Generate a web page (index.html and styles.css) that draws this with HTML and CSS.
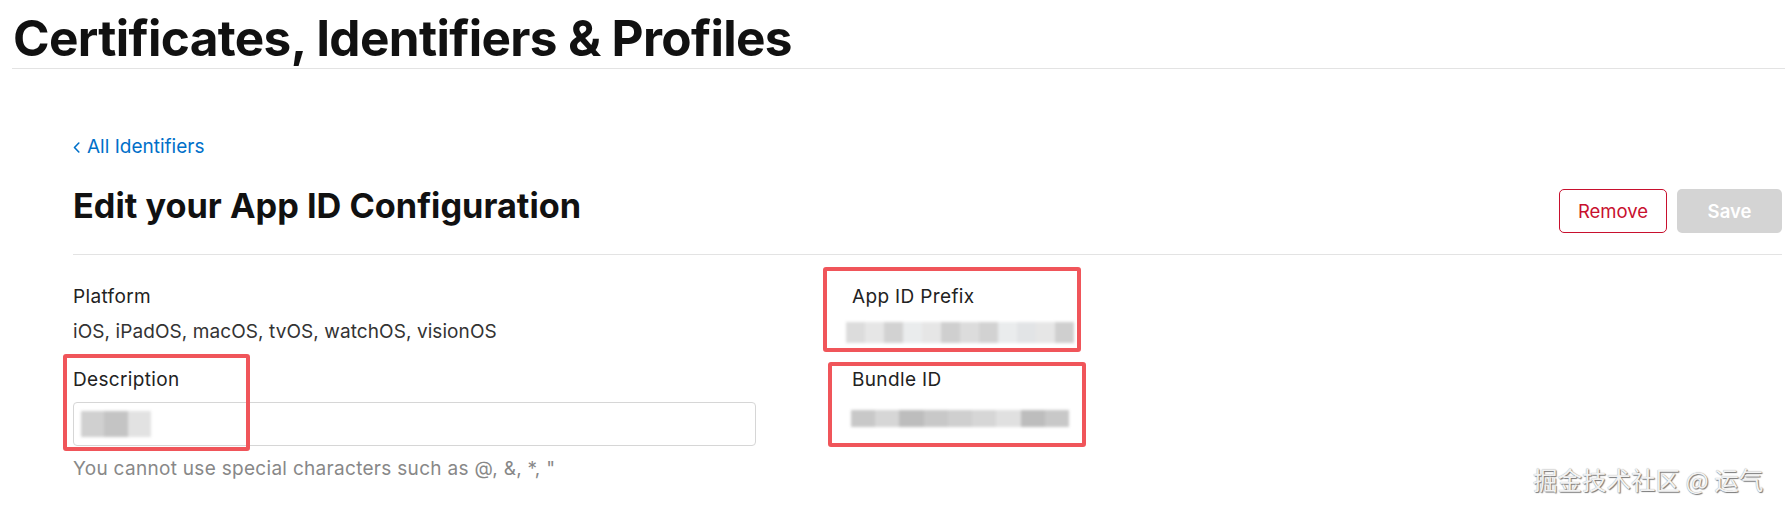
FILE: index.html
```html
<!DOCTYPE html>
<html lang="en">
<head>
<meta charset="utf-8">
<title>Edit your App ID Configuration</title>
<link rel="stylesheet" href="styles.css">
</head>
<body>
<header class="page-header">
  <h1 class="page-title">Certificates, Identifiers &amp; Profiles</h1>
</header>
<main class="content">
  <a class="back-link" href="#"><svg class="chev" width="7" height="11" viewBox="0 0 7 11"><path d="M5.8 1 L1.5 5.5 L5.8 10" fill="none" stroke="currentColor" stroke-width="1.6" stroke-linecap="round" stroke-linejoin="round"/></svg><span>All Identifiers</span></a>
  <div class="title-row">
    <h2 class="section-title">Edit your App ID Configuration</h2>
    <div class="actions">
      <button class="btn btn-remove" type="button">Remove</button>
      <button class="btn btn-save" type="button" disabled>Save</button>
    </div>
  </div>
  <div class="form-grid">
    <div class="field">
      <div class="label">Platform</div>
      <div class="value">iOS, iPadOS, macOS, tvOS, watchOS, visionOS</div>
    </div>
    <div class="field">
      <div class="label">App ID Prefix</div>
      <div class="mosaic mosaic-prefix">
        <i class="c1"></i><i class="c2"></i><i class="c3"></i><i class="c4"></i><i class="c2"></i><i class="c5"></i><i class="c1"></i><i class="c3"></i><i class="c4"></i><i class="c6"></i><i class="c2"></i><i class="c5"></i>
      </div>
      <div class="annot annot-prefix"></div>
    </div>
    <div class="field">
      <div class="label">Description</div>
      <div class="input-box">
        <div class="mosaic mosaic-desc"><i class="d1"></i><i class="d2"></i><i class="d3"></i></div>
      </div>
      <div class="help">You cannot use special characters such as @, &amp;, *, "</div>
      <div class="annot annot-desc"></div>
    </div>
    <div class="field">
      <div class="label">Bundle ID</div>
      <div class="mosaic mosaic-bundle">
        <i class="b1"></i><i class="b2"></i><i class="b3"></i><i class="b1"></i><i class="b4"></i><i class="b2"></i><i class="b5"></i><i class="b3"></i><i class="b1"></i>
      </div>
      <div class="annot annot-bundle"></div>
    </div>
  </div>
</main>
<div class="watermark">掘金技术社区 @ 运气</div>
</body>
</html>
```

FILE: styles.css
```css
html, body {
  margin: 0;
  padding: 0;
  background: #ffffff;
}

body {
  font-family: Inter, "Noto Sans", "Liberation Sans", sans-serif;
  color: #333333;
  position: relative;
  min-height: 510px;
}

.page-header {
  margin-left: 12px;
  padding: 10px 0 2px 1px;
  border-bottom: 1px solid #e3e3e3;
}

.page-title {
  margin: 0;
  font-size: 49.5px;
  line-height: 56px;
  font-weight: 700;
  letter-spacing: -0.65px;
  color: #111111;
}

.content {
  padding: 66px 3px 0 73px;
}

.back-link {
  display: inline-flex;
  align-items: center;
  gap: 7px;
  font-size: 19px;
  line-height: 24px;
  color: #0070c9;
  text-decoration: none;
}

.chev {
  display: block;
  margin-top: 1px;
}

.title-row {
  display: flex;
  justify-content: space-between;
  align-items: flex-start;
  margin-top: 27px;
  padding-bottom: 21px;
  border-bottom: 1px solid #e3e3e3;
}

.section-title {
  margin: 0;
  font-size: 34.3px;
  line-height: 40px;
  font-weight: 700;
  letter-spacing: 0;
  color: #111111;
}

.actions {
  display: flex;
  gap: 10px;
  margin-top: 3px;
}

.btn {
  height: 44px;
  border-radius: 5px;
  font-family: Inter, "Noto Sans", sans-serif;
  font-size: 18.5px;
  padding: 0;
}

.btn-remove {
  width: 108px;
  border: 1px solid #c8102e;
  background: #ffffff;
  color: #c8102e;
  font-weight: 400;
}

.btn-save {
  width: 105px;
  border: none;
  background: #d4d4d4;
  color: #ffffff;
  font-weight: 600;
}

.form-grid {
  display: grid;
  grid-template-columns: 683px 1fr;
  column-gap: 96px;
  row-gap: 24px;
  margin-top: 30px;
}

.field {
  position: relative;
}

.label {
  font-size: 19px;
  line-height: 24px;
  font-weight: 400;
  letter-spacing: 0.35px;
  color: #222222;
}

.value {
  margin-top: 11px;
  font-size: 19px;
  line-height: 24px;
  letter-spacing: 0.08px;
  color: #333333;
}

.input-box {
  margin-top: 10px;
  height: 44px;
  box-sizing: border-box;
  border: 1px solid #d6d6d6;
  border-radius: 4px;
  display: flex;
  align-items: center;
  padding-left: 5px;
}

.help {
  margin-top: 11px;
  font-size: 19px;
  line-height: 24px;
  letter-spacing: 0.3px;
  color: #888888;
}

.mosaic {
  display: flex;
  filter: blur(1.5px);
}

.mosaic i {
  display: block;
  flex: 1;
  height: 100%;
}

.mosaic-prefix {
  margin-top: 13px;
  margin-left: -6px;
  width: 228px;
  height: 21px;
}

.mosaic-prefix .c1 { background: #dcdcdc; }
.mosaic-prefix .c2 { background: #e6e6e6; }
.mosaic-prefix .c3 { background: #d2d2d2; }
.mosaic-prefix .c4 { background: #eaeced; }
.mosaic-prefix .c5 { background: #cfcfcf; }
.mosaic-prefix .c6 { background: #e2e4e6; }

.mosaic-bundle {
  margin-top: 18px;
  margin-left: -1px;
  width: 218px;
  height: 17px;
}

.mosaic-bundle .b1 { background: #c8c8c8; }
.mosaic-bundle .b2 { background: #d6d6d6; }
.mosaic-bundle .b3 { background: #bdbdbd; }
.mosaic-bundle .b4 { background: #cfcfcf; }
.mosaic-bundle .b5 { background: #e0e0e0; }

.mosaic-desc {
  width: 70px;
  height: 26px;
  margin-left: 2px;
}

.mosaic-desc .d1 { background: #d0d0d0; }
.mosaic-desc .d2 { background: #c4c4c4; }
.mosaic-desc .d3 { background: #e2e2e2; }

.annot {
  position: absolute;
  box-sizing: border-box;
  border: 4px solid #f0555a;
  border-radius: 3px;
  pointer-events: none;
}

.annot-prefix {
  left: -29px;
  top: -18px;
  width: 258px;
  height: 85px;
}

.annot-bundle {
  left: -24px;
  top: -6px;
  width: 258px;
  height: 85px;
}

.annot-desc {
  left: -10px;
  top: -14px;
  width: 187px;
  height: 97px;
}

.watermark {
  position: absolute;
  left: 1533px;
  top: 466px;
  font-family: "Noto Sans CJK SC", sans-serif;
  font-size: 24.5px;
  line-height: 28px;
  color: #f2f2f2;
  text-shadow: 1px 1px 1px #777777, 0 0 1px #999999;
  white-space: nowrap;
}
```
